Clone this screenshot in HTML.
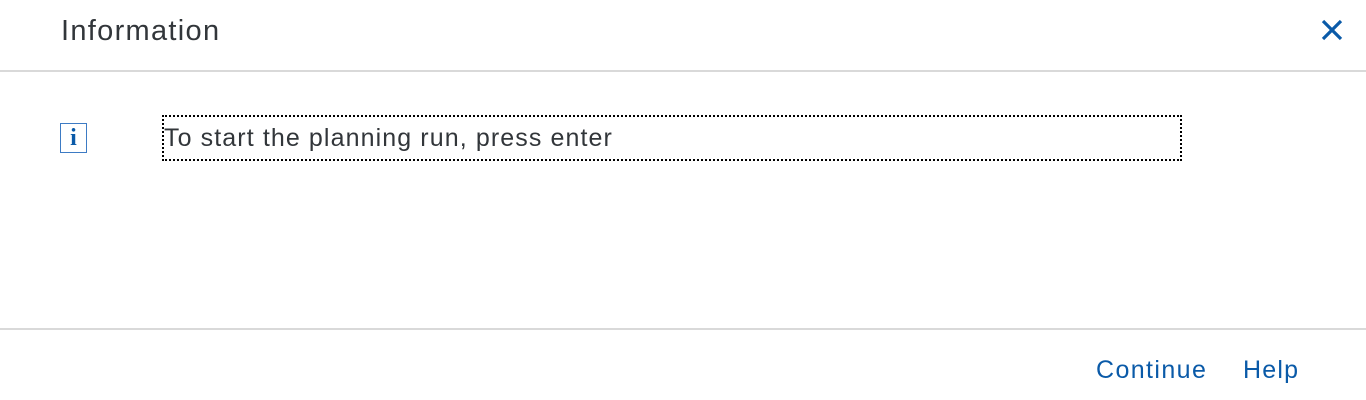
<!DOCTYPE html>
<html><head><style>
body{margin:0;width:1366px;height:400px;background:#fff;font-family:"Liberation Sans",sans-serif;position:relative;overflow:hidden}
.a{position:absolute;white-space:nowrap}
</style></head><body>
<div class="a" style="left:61px;top:15px;font-size:29px;color:#32363a;letter-spacing:1.3px">Information</div>
<svg class="a" style="left:1320px;top:19px" width="24" height="22" viewBox="0 0 24 22"><path d="M3 2L21 20M21 2L3 20" stroke="#0a5aa8" stroke-width="3.2"/></svg>
<div class="a" style="left:0;top:70px;width:1366px;height:2px;background:#d9d9d9"></div>
<div class="a" style="left:60px;top:123px;width:27px;height:30px;border:1.5px solid #3d7bc4;box-sizing:border-box;color:#0a5aa8;font:bold 24px 'Liberation Serif',serif;text-align:center;line-height:29px">i</div>
<div class="a" style="left:162px;top:115px;width:1020px;height:46px;border:2px dotted #000;box-sizing:border-box"></div>
<div class="a" style="left:164px;top:124px;font-size:25px;color:#32363a;letter-spacing:1.1px">To start the planning run, press enter</div>
<div class="a" style="left:0;top:328px;width:1366px;height:2px;background:#d9d9d9"></div>
<div class="a" style="left:1096px;top:356px;font-size:25px;color:#0a5aa8;letter-spacing:1.4px">Continue</div>
<div class="a" style="left:1243px;top:356px;font-size:25px;color:#0a5aa8;letter-spacing:1.2px">Help</div>
</body></html>
